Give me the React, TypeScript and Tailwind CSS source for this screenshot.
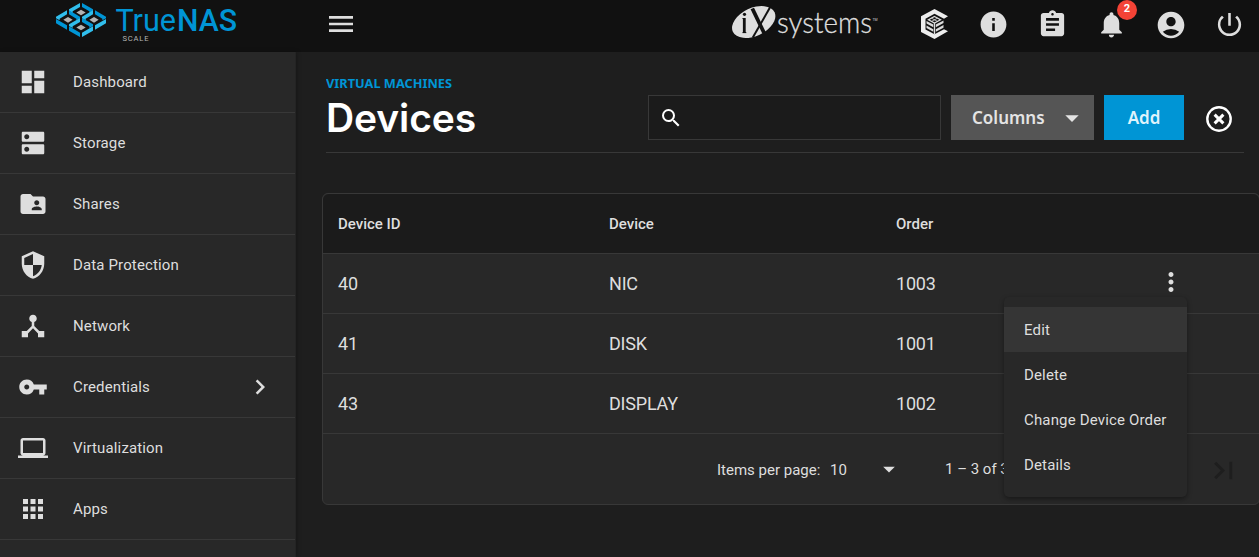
import React from "react";
import {
  MdAccountCircle,
  MdApps,
  MdArrowDropDown,
  MdAssignment,
  MdChevronRight,
  MdDashboard,
  MdDeviceHub,
  MdDns,
  MdFolderShared,
  MdInfo,
  MdLaptop,
  MdLastPage,
  MdMenu,
  MdMoreVert,
  MdNotifications,
  MdPowerSettingsNew,
  MdSearch,
  MdSecurity,
  MdVpnKey,
} from "react-icons/md";

const nav = [
  { label: "Dashboard", Icon: MdDashboard },
  { label: "Storage", Icon: MdDns },
  { label: "Shares", Icon: MdFolderShared },
  { label: "Data Protection", Icon: MdSecurity },
  { label: "Network", Icon: MdDeviceHub },
  { label: "Credentials", Icon: MdVpnKey, expandable: true },
  { label: "Virtualization", Icon: MdLaptop },
  { label: "Apps", Icon: MdApps },
];

const devices = [
  { id: 40, device: "NIC", order: 1003 },
  { id: 41, device: "DISK", order: 1001 },
  { id: 43, device: "DISPLAY", order: 1002 },
];

const actions = ["Edit", "Delete", "Change Device Order", "Details"];

const cells = [
  { x: 243, y: 9 },
  { x: 204, y: 31 },
  { x: 282, y: 31 },
  { x: 243, y: 54 },
];

function TrueNasMark() {
  return (
    <svg width="50" height="34" viewBox="168 9 150 102" className="block shrink-0">
      {cells.map(({ x, y }) => (
        <g key={`${x}-${y}`} transform={`translate(${x} ${y})`}>
          <path fill="#31beec" d="M-3 0V12L-25 25V30L-36 24V19Z" />
          <path fill="#0095d5" d="M3 0V12L25 25V30L36 24V19Z" />
          <path fill="#b3b3b3" d="M0 20L14 28.500L0 37L-14 28.500Z" />
        </g>
      ))}
      <path fill="#0095d5" d="M168 57L201 76V89L168 70Z M207 79L240 98V111L207 92Z" />
      <path fill="#31beec" d="M246 98L279 79V92L246 111Z M285 76L318 57V70L285 89Z" />
    </svg>
  );
}

function IxMark() {
  return (
    <svg width="146" height="44" viewBox="0 0 146 44" className="block">
      <ellipse cx="21.700" cy="22" rx="23" ry="14" transform="rotate(-25 21.700 22)" fill="#dedede" />
      <g fill="none" stroke="#111">
        <path d="M12.300 18v15" strokeWidth="2.800" />
        <path d="M10.500 18.500h2M10.500 32.600h3.800" strokeWidth="1" />
        <path d="M20.800 37.500L38.800 6" strokeWidth="2" />
        <path d="M20.300 8.500l11.800 24.500" strokeWidth="3.800" />
      </g>
      <circle cx="12.500" cy="14.300" r="1.600" fill="#111" />
      <text x="45" y="33.200" textLength="95" lengthAdjust="spacingAndGlyphs" fill="#dedede" stroke="#dedede" strokeWidth="0.300" fontFamily="Lato, sans-serif" fontWeight="300" fontSize="29">systems</text>
      <text x="140.500" y="20.500" textLength="5" fill="#cfcfcf" fontFamily="Roboto, sans-serif" fontSize="3.500">TM</text>
    </svg>
  );
}

function CommandMark() {
  return (
    <svg width="27" height="30" viewBox="0 0 27 30" className="block">
      <path fill="#ededed" d="M13.500 0L27 7.300L23 9.800L13.500 4.800L4.500 9.800V20.400L13.500 25.200L23 20.200L27 22.300L13.500 30L0 23V7.300Z" />
      <g fill="none" stroke="#dcdcdc" strokeWidth="1.300">
        <path d="M13.500 7.500L19.500 10.700L13.500 14L7.500 10.700Z" />
        <path d="M10.500 9.200l6 3.200M16.500 9.200l-6 3.200" strokeWidth="0.800" />
        <path d="M13.500 14v11" />
      </g>
      <g fill="#dcdcdc">
        <path d="M14.800 15.500L22.500 11.500V14L14.800 18.200Z" />
        <path d="M14.800 20.200L22.500 16V18.700L14.800 22.800Z" />
        <path d="M12.300 15.500L5.500 12V14.500L12.300 18.200Z" />
        <path d="M12.300 20.200L5.500 16.500V19L12.300 22.800Z" />
      </g>
    </svg>
  );
}

function TopBar() {
  return (
    <header className="flex h-[52px] shrink-0 bg-[#111111]">
      <div className="flex w-[296px] pl-[56px] pt-[3px]">
        <TrueNasMark />
        <svg width="140" height="44" viewBox="0 0 140 44" className="block shrink-0">
          <g fontFamily="Roboto, sans-serif" fill="#0095d5" fontSize="32">
            <text x="9.500" y="28.300" textLength="60.500" lengthAdjust="spacingAndGlyphs">True</text>
            <text x="71" y="28.300" textLength="60" lengthAdjust="spacingAndGlyphs" fontWeight="500">NAS</text>
          </g>
          <text x="16.500" y="38.300" textLength="26" fontFamily="Roboto, sans-serif" fontSize="7.600" fill="#b5b5b5">SCALE</text>
        </svg>
      </div>
      <div className="flex flex-1 items-center justify-between pb-1 pl-[29px] pr-[14px] text-[#dedede]">
        <MdMenu size={32} />
        <div className="flex items-center">
          <div className="-mt-1">
            <IxMark />
          </div>
          <div className="ml-[43px] flex items-center gap-[29px]">
            <div className="mr-px">
              <CommandMark />
            </div>
            <MdInfo size={31} />
            <MdAssignment size={31} className="-ml-px" />
            <div className="relative -ml-px">
              <MdNotifications size={31} />
              <span className="absolute -top-[9px] left-[21px] flex size-5 items-center justify-center rounded-full bg-[#f44336] text-[11px] font-bold text-white">2</span>
            </div>
            <MdAccountCircle size={32} className="-ml-px mt-0.5" />
            <MdPowerSettingsNew size={31} className="-ml-[2px]" />
          </div>
        </div>
      </div>
    </header>
  );
}

function Sidebar() {
  return (
    <nav className="z-10 w-[296px] shrink-0 border-r border-[#242424] bg-[#282828] shadow-[1px_0_4px_rgba(0,0,0,0.25)]">
      {nav.map(({ label, Icon, expandable }) => (
        <div key={label} className="flex h-[61px] items-center border-b border-[#383838] pl-[18px] pr-[20px] text-[15px] text-[#dedede]">
          <Icon size={30} />
          <span className="ml-[25px] flex-1 tracking-[0.14px]">{label}</span>
          {expandable && <MdChevronRight size={30} />}
        </div>
      ))}
    </nav>
  );
}

function PageHeader() {
  return (
    <div className="mr-[15px] flex h-[77px] border-b border-[#383838]">
      <div className="w-[322px] whitespace-nowrap">
        <svg width="128" height="16" className="block font-['Noto_Sans'] text-[12px] font-bold">
          <text x="0" y="12" textLength="126" lengthAdjust="spacingAndGlyphs" fill="#0095d5">VIRTUAL MACHINES</text>
        </svg>
        <h1 className="font-[Inter] text-[39px] font-semibold leading-[52px] tracking-[-0.1px] text-white">Devices</h1>
      </div>
      <div className="mt-[19px] flex h-[45px] items-center">
        <div className="flex h-[45px] w-[293px] items-center border border-[#383838] bg-[#1b1b1b] pl-[10px] text-white">
          <MdSearch size={24} />
        </div>
        <button className="ml-[10px] flex h-[45px] w-[143px] items-center justify-between bg-[#555555] pl-[21px] pr-[6px] font-['Noto_Sans'] text-[17px] font-semibold text-[#e4e4e4]">
          Columns
          <MdArrowDropDown size={32} />
        </button>
        <button className="ml-[10px] h-[45px] w-[80px] bg-[#0095d5] font-['Noto_Sans'] text-[17px] font-semibold text-[#dff3fc]">Add</button>
        <svg width="26" height="26" viewBox="0 0 26 26" className="ml-[22px] mt-[3px]">
          <circle cx="13" cy="13" r="11.700" fill="none" stroke="#fff" strokeWidth="2.400" />
          <path d="M8.600 8.600l8.800 8.800M17.400 8.600l-8.800 8.800" stroke="#fff" strokeWidth="3" />
        </svg>
      </div>
    </div>
  );
}

function RowMenu() {
  return (
    <div className="absolute left-[-152px] top-[28px] z-20 w-[183px] rounded-[5px] bg-[#282828] py-[10px] text-[15px] tracking-normal shadow-[0_2px_5px_rgba(0,0,0,0.4)]">
      {actions.map((a) => (
        <div key={a} className={a === "Edit" ? "flex h-[45px] items-center whitespace-nowrap bg-[#353535] pl-5 pt-0.5" : "flex h-[45px] items-center whitespace-nowrap pl-5 pt-0.5"}>
          <span className="tracking-[0.16px]">{a}</span>
        </div>
      ))}
    </div>
  );
}

function DeviceTable() {
  return (
    <section className="-ml-1 -mr-px mt-10 rounded-[6px] border border-[#383838] bg-[#282828] text-[#dedede]">
      <div className="grid h-[60px] grid-cols-[271px_287px_260px_1fr] items-center rounded-t-[6px] border-b border-[#383838] bg-[#1b1b1b] pl-[15px] pt-0.5 text-[15px] font-medium">
        <span>Device ID</span>
        <span>Device</span>
        <span>Order</span>
      </div>
      {devices.map((d, i) => (
        <div key={d.id} className="grid h-[60px] grid-cols-[271px_287px_260px_1fr] items-center border-b border-[#383838] pl-[15px] text-[18px] tracking-[-0.2px]">
          <span>{d.id}</span>
          <span>{d.device}</span>
          <span>{d.order}</span>
          {i === 0 && (
            <div className="relative size-[30px] pb-1">
              <MdMoreVert size={30} className="-mt-[2px]" />
              <RowMenu />
            </div>
          )}
        </div>
      ))}
      <div className="flex h-[70px] items-center pl-[394px] text-[15px]">
        <span className="mt-0.5 w-[113px]">Items per page:</span>
        <span className="mt-0.5 w-[45px]">10</span>
        <MdArrowDropDown size={28} />
        <span className="ml-[42px] w-[261px]">1 – 3 of 3</span>
        <MdLastPage size={35} className="mt-0.5 text-[#1e1e1e]" />
      </div>
    </section>
  );
}

export default function App() {
  return (
    <div className="flex h-[557px] w-[1259px] flex-col overflow-hidden bg-[#1e1e1e] font-[Roboto]">
      <TopBar />
      <div className="flex min-h-0 flex-1">
        <Sidebar />
        <main className="min-w-0 flex-1 pl-[30px] pt-6">
          <PageHeader />
          <DeviceTable />
        </main>
      </div>
    </div>
  );
}
